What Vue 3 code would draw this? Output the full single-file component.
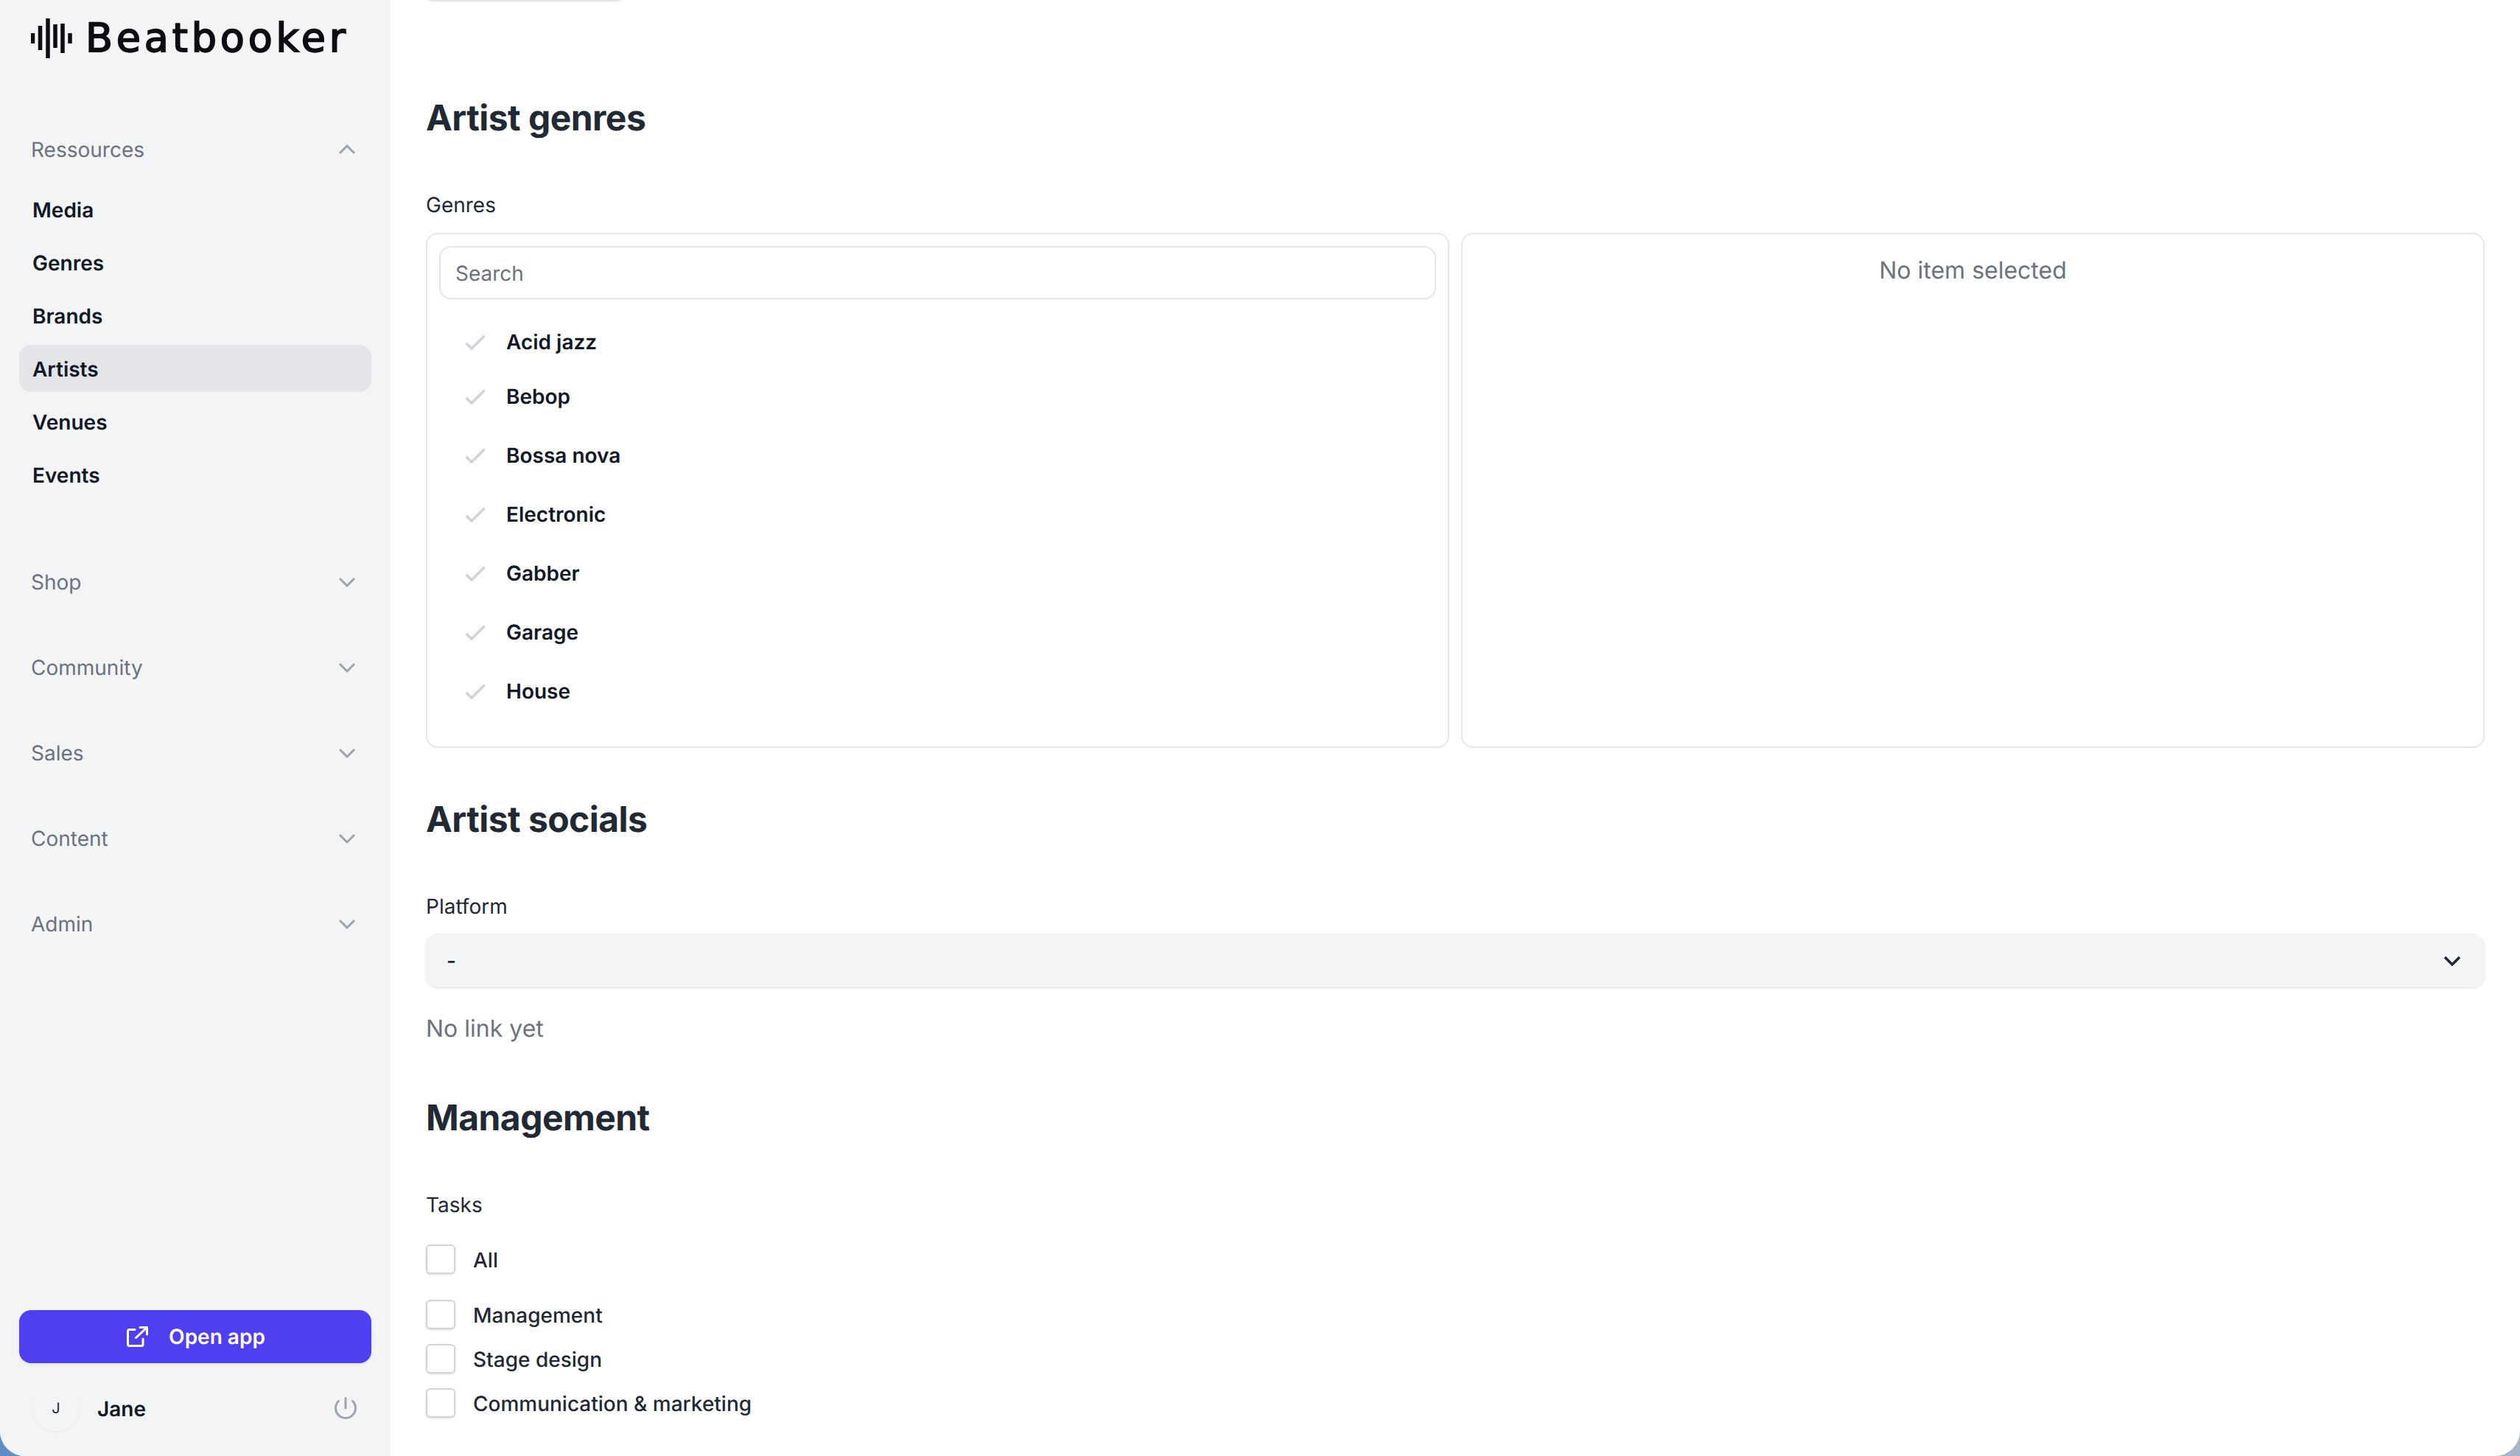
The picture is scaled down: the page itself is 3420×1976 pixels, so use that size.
<script setup>
const resources = ['Media', 'Genres', 'Brands', 'Artists', 'Venues', 'Events']
const groups = ['Shop', 'Community', 'Sales', 'Content', 'Admin']
const genres = ['Acid jazz', 'Bebop', 'Bossa nova', 'Electronic', 'Gabber', 'Garage', 'House']
const tasks = ['Management', 'Stage design', 'Communication & marketing']
const bars = [
  { x: 2.5, y1: 20, y2: 34 },
  { x: 12.5, y1: 10, y2: 43 },
  { x: 23, y1: 0, y2: 54 },
  { x: 33, y1: 8, y2: 40 },
  { x: 43, y1: 7, y2: 47 },
  { x: 53, y1: 20, y2: 34 }
]
</script>

<template>
  <div class="desktop">
    <div class="window">
      <aside class="sidebar">
        <div class="logo">
          <svg class="logo-mark" width="56" height="54" viewBox="0 0 56 54">
            <line v-for="b in bars" :key="b.x" :x1="b.x" :x2="b.x" :y1="b.y1" :y2="b.y2" stroke="#0c0e13" stroke-width="5.5" />
          </svg>
          <span class="wordmark">Beatbooker</span>
        </div>

        <nav class="nav">
          <div class="group open">
            <div class="group-head">
              <span>Ressources</span>
              <svg class="chev" viewBox="0 0 24 24" fill="none"><path d="m4.5 15.75 7.5-7.5 7.5 7.5" /></svg>
            </div>
            <div class="rows">
              <a v-for="r in resources" :key="r" class="row" :class="{ active: r === 'Artists' }">{{ r }}</a>
            </div>
          </div>
          <div v-for="g in groups" :key="g" class="group">
            <div class="group-head">
              <span>{{ g }}</span>
              <svg class="chev" viewBox="0 0 24 24" fill="none"><path d="m19.5 8.25-7.5 7.5-7.5-7.5" /></svg>
            </div>
          </div>
        </nav>

        <div class="foot">
          <button class="open-app" type="button">
            <svg width="29" height="28" viewBox="0 0 29 28" fill="none" stroke="#fff" stroke-width="3" stroke-linecap="round" stroke-linejoin="round">
              <path d="M11 4.5H3.5a2 2 0 0 0-2 2V24.5a2 2 0 0 0 2 2H20a2 2 0 0 0 2-2V17" />
              <path d="M12.5 15.5 27 2M18 1.5h9.5V11" />
            </svg>
            <span>Open app</span>
          </button>
          <div class="user">
            <div class="avatar">J</div>
            <span class="user-name">Jane</span>
            <svg class="power" width="36" height="36" viewBox="0 0 24 24" fill="none"><path d="M5.636 5.636a9 9 0 1 0 12.728 0M12 3v9" /></svg>
          </div>
        </div>
      </aside>

      <main class="main">
        <div class="cut-button"></div>

        <h2 class="title first">Artist genres</h2>
        <div class="label genres-label">Genres</div>
        <div class="panels">
          <div class="panel">
            <input class="search" type="text" placeholder="Search" />
            <ul class="list">
              <li v-for="g in genres" :key="g" class="item">
                <svg width="40" height="40" viewBox="0 0 24 24" fill="none"><path d="M4.5 13l4.5 4.5L19.5 7" /></svg>
                <span>{{ g }}</span>
              </li>
            </ul>
          </div>
          <div class="panel empty">No item selected</div>
        </div>

        <h2 class="title">Artist socials</h2>
        <div class="label">Platform</div>
        <div class="select">
          <span>-</span>
          <svg width="32" height="32" viewBox="0 0 24 24" fill="none"><path d="m19.5 8.25-7.5 7.5-7.5-7.5" /></svg>
        </div>
        <p class="no-link">No link yet</p>

        <h2 class="title">Management</h2>
        <div class="label tasks-label">Tasks</div>
        <label class="check all"><span class="box"></span><span class="check-text">All</span></label>
        <div class="task-list">
          <label v-for="t in tasks" :key="t" class="check"><span class="box"></span><span class="check-text">{{ t }}</span></label>
        </div>
      </main>
    </div>
  </div>
</template>

<style>
html, body { margin: 0; padding: 0; }
</style>

<style scoped>
.desktop {
  width: 3420px;
  height: 1976px;
  background: linear-gradient(90deg, #5f8cc4, #a9b5c8);
  font-family: Inter, "Noto Sans", sans-serif;
  font-size: 28px;
  color: #1f2937;
  text-rendering: geometricPrecision;
}
.window {
  display: flex;
  height: 100%;
  background: #fff;
  border-radius: 0 0 34px 34px;
  overflow: hidden;
}
.sidebar {
  width: 530px;
  flex: none;
  display: flex;
  flex-direction: column;
  box-sizing: border-box;
  background: #f3f4f6;
  padding: 25px 26px 33px;
}
.logo {
  display: flex;
  align-items: flex-start;
  gap: 18px;
  height: 54px;
  padding-left: 16px;
}
.logo-mark { flex: none; }
.wordmark {
  font-family: "DejaVu Sans", sans-serif;
  font-size: 54px;
  line-height: 54px;
  letter-spacing: 4.8px;
  color: #0c0e13;
  -webkit-text-stroke: 1.8px #0c0e13;
}
.nav {
  margin-top: 96px;
  display: flex;
  flex-direction: column;
  gap: 60px;
}
.group.open { padding-bottom: 26px; }
.group-head {
  display: flex;
  align-items: center;
  justify-content: space-between;
  height: 56px;
  padding: 0 17px 0 16px;
  color: #6b7280;
}
.chev { width: 32px; height: 32px; }
.chev path { stroke: #9ca3af; stroke-width: 2.25; }
.rows {
  margin-top: 21px;
  display: flex;
  flex-direction: column;
  gap: 8px;
}
.row {
  height: 64px;
  box-sizing: border-box;
  padding: 2px 0 0 18px;
  display: flex;
  align-items: center;
  border-radius: 16px;
  font-weight: 600;
  color: #111827;
}
.row.active { background: #e4e5e9; }
.foot { margin-top: auto; }
.open-app {
  width: 100%;
  height: 72px;
  display: flex;
  align-items: center;
  justify-content: center;
  gap: 28px;
  padding: 0 0 0 2px;
  border: 0;
  border-radius: 16px;
  background: #4f3ff0;
  color: #fff;
  font: 600 28px Inter, sans-serif;
  text-rendering: geometricPrecision;
  box-shadow: 0 2px 4px rgba(0, 0, 0, 0.08);
}
.user {
  display: flex;
  align-items: center;
  margin-top: 29px;
  padding: 0 17px 0 18px;
}
.avatar {
  width: 64px;
  height: 64px;
  border-radius: 50%;
  display: flex;
  align-items: center;
  justify-content: center;
  background: #f3f4f6;
  box-shadow: 0 1px 3px rgba(0, 0, 0, 0.07);
  font-size: 20px;
}
.user-name {
  margin-left: 24px;
  padding-top: 1px;
  font-weight: 600;
  color: #111827;
}
.power { margin-left: auto; }
.power path { stroke: #9ca3af; stroke-width: 2; stroke-linecap: round; }

.main {
  flex: 1;
  min-width: 0;
  padding: 0 48px;
  overflow: hidden;
}
.cut-button {
  width: 264px;
  height: 12px;
  margin: -12px 0 0 2px;
  border-radius: 12px;
  background: #fff;
  box-shadow: 0 1px 4px rgba(0, 0, 0, 0.2);
}
.title {
  margin: 65px 0 0;
  font-size: 48px;
  line-height: 64px;
  font-weight: 700;
  letter-spacing: -0.55px;
  color: #212934;
}
.title.first { margin-top: 128px; }
.label {
  margin-top: 66px;
  line-height: 40px;
  color: #1f2937;
}
.panels {
  margin-top: 18px;
  height: 699px;
  display: grid;
  grid-template-columns: 1fr 1fr;
  gap: 16px;
}
.panel {
  box-sizing: border-box;
  border: 2px solid #e5e7eb;
  border-radius: 16px;
  padding: 16px;
}
.search {
  display: block;
  width: 100%;
  height: 72px;
  box-sizing: border-box;
  padding: 1px 20px 0;
  border: 2px solid #e5e7eb;
  border-radius: 16px;
  background: #fff;
  font: 400 28px Inter, sans-serif;
  text-rendering: geometricPrecision;
  color: #1f2937;
  box-shadow: 0 1px 2px rgba(0, 0, 0, 0.05);
  outline: none;
}
.search::placeholder { color: #6b7280; opacity: 1; }
.list {
  list-style: none;
  margin: 0;
  padding: 0 0 0 29px;
}
.item {
  display: flex;
  align-items: center;
  gap: 22px;
  height: 40px;
  margin-top: 40px;
  font-weight: 600;
  color: #111827;
}
.item:first-child { margin-top: 38px; }
.item:nth-child(2) { margin-top: 34px; }
.item path { stroke: #d1d5db; stroke-width: 2.2; }
.empty {
  padding-top: 25px;
  text-align: center;
  font-size: 32px;
  line-height: 48px;
  color: #6b7280;
}
.select {
  margin-top: 17px;
  height: 72px;
  display: flex;
  align-items: center;
  justify-content: space-between;
  padding: 1px 28px 0;
  border-radius: 16px;
  background: #f3f4f6;
  font-weight: 500;
  box-shadow: 0 1px 3px rgba(0, 0, 0, 0.12);
}
.select path { stroke: #1f2937; stroke-width: 2.75; }
.no-link {
  margin: 32px 0 0;
  font-size: 32px;
  line-height: 48px;
  color: #6b7280;
}
.check {
  display: flex;
  align-items: center;
  gap: 24px;
  height: 40px;
  font-weight: 500;
  color: #1f2937;
}
.check-text { padding-top: 1px; }
.box {
  width: 40px;
  height: 40px;
  flex: none;
  box-sizing: border-box;
  border: 2px solid #d1d5db;
  border-radius: 6px;
  background: #fff;
  box-shadow: 0 1px 3px rgba(0, 0, 0, 0.14);
}
.all { margin-top: 34px; }
.task-list {
  margin-top: 35px;
  display: flex;
  flex-direction: column;
  gap: 20px;
}
</style>
